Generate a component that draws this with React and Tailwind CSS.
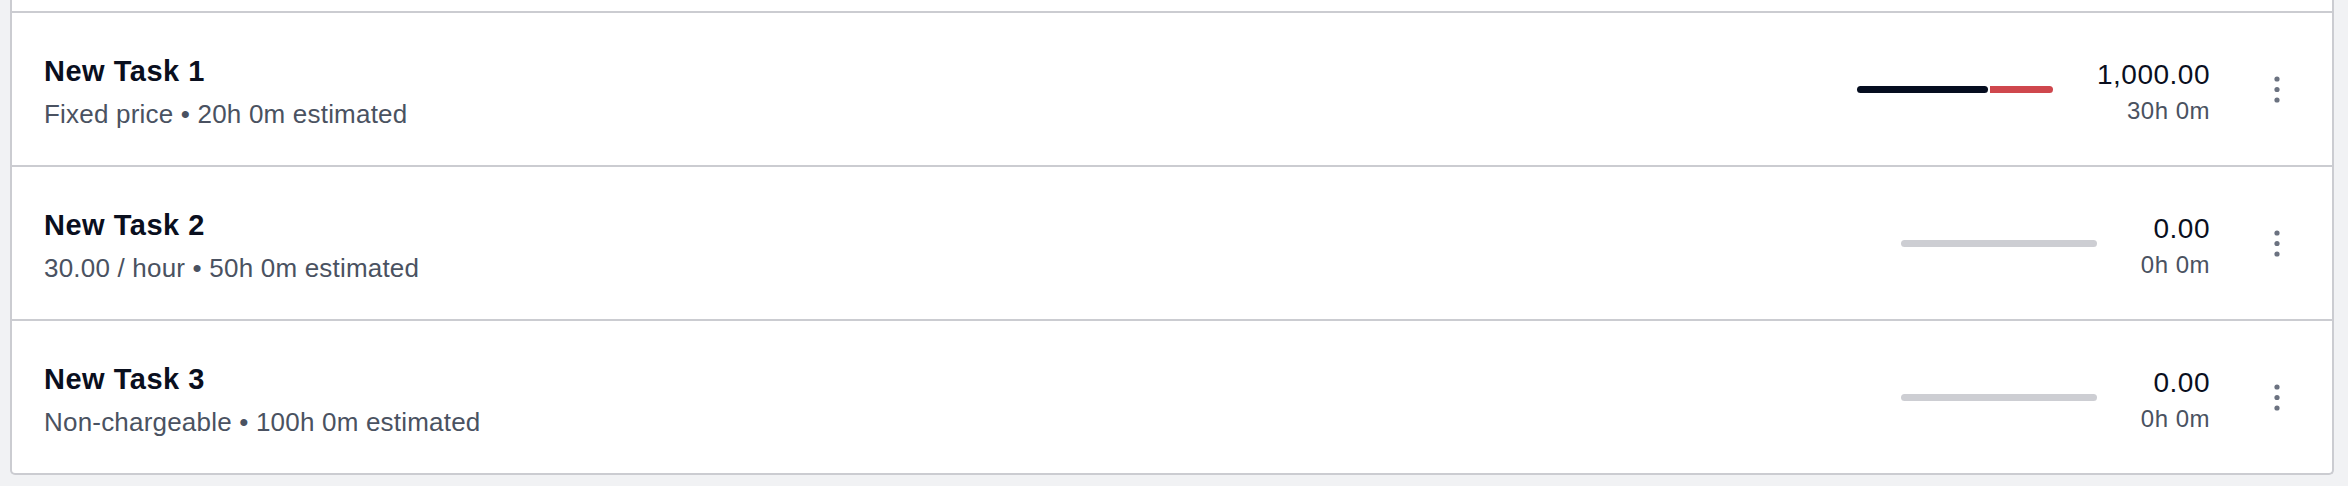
import { useState } from 'react';

const TASKS = [
  {
    id: 1,
    name: 'New Task 1',
    meta: 'Fixed price • 20h 0m estimated',
    amount: '1,000.00',
    time: '30h 0m',
    used: 0.667,
    over: true,
  },
  {
    id: 2,
    name: 'New Task 2',
    meta: '30.00 / hour • 50h 0m estimated',
    amount: '0.00',
    time: '0h 0m',
    used: 0,
    over: false,
  },
  {
    id: 3,
    name: 'New Task 3',
    meta: 'Non-chargeable • 100h 0m estimated',
    amount: '0.00',
    time: '0h 0m',
    used: 0,
    over: false,
  },
];

const FONT = "font-['Liberation_Sans','Helvetica_Neue',Arial,sans-serif]";

function DotsIcon() {
  return (
    <svg width="6" height="27" viewBox="0 0 6 27" fill="#6b7280">
      <circle cx="3" cy="3" r="2.6" />
      <circle cx="3" cy="13.5" r="2.6" />
      <circle cx="3" cy="24" r="2.6" />
    </svg>
  );
}

function ProgressBar({ used, over }) {
  if (!used) {
    return <div className="w-[196px] h-[7px] rounded-full bg-[#cdced3]" />;
  }
  return (
    <div className="w-[196px] h-[7px] flex gap-[2px]">
      <div className="h-full rounded-full bg-[#050d1f]" style={{ width: `${used * 100}%` }} />
      {over && <div className="h-full flex-1 rounded-r-full bg-[#cf474d]" />}
    </div>
  );
}

function TaskRow({ task, last }) {
  const [hover, setHover] = useState(false);
  return (
    <div
      onMouseEnter={() => setHover(true)}
      onMouseLeave={() => setHover(false)}
      className={`flex items-center pl-8 pr-[35px] ${last ? 'h-[152px]' : 'h-[154px] border-b-2 border-[#cbccd1]'} ${hover ? 'bg-white' : ''}`}
    >
      <div className="flex-1 min-w-0 pt-[6px]">
        <div className="text-[29px] leading-[34px] font-bold tracking-[0.5px] text-[#0a0f1e]">{task.name}</div>
        <div className="mt-[10px] text-[26px] leading-[32px] tracking-[0.2px] text-[#4a5261]">{task.meta}</div>
      </div>
      <div className="flex items-center gap-[44px]">
        <ProgressBar used={task.used} over={task.over} />
        <div className="text-right pt-[6px]">
          <div className="text-[28px] leading-[32px] tracking-[0.5px] text-[#0a0f1e]">{task.amount}</div>
          <div className="mt-1.5 text-[24px] leading-[28px] tracking-[0.5px] text-[#4a5261]">{task.time}</div>
        </div>
      </div>
      <button type="button" className="ml-[47px] w-10 h-10 flex items-center justify-center">
        <DotsIcon />
      </button>
    </div>
  );
}

export default function App() {
  return (
    <div className={`w-full h-[486px] bg-[#f1f2f4] pl-[10px] pr-[14px] ${FONT}`}>
      <div className="bg-white border-2 border-t-0 border-[#cbccd1] rounded-b-[5px]">
        <div className="h-[13px] border-b-2 border-[#cbccd1]" />
        {TASKS.map((task, i) => (
          <TaskRow key={task.id} task={task} last={i === TASKS.length - 1} />
        ))}
      </div>
    </div>
  );
}
